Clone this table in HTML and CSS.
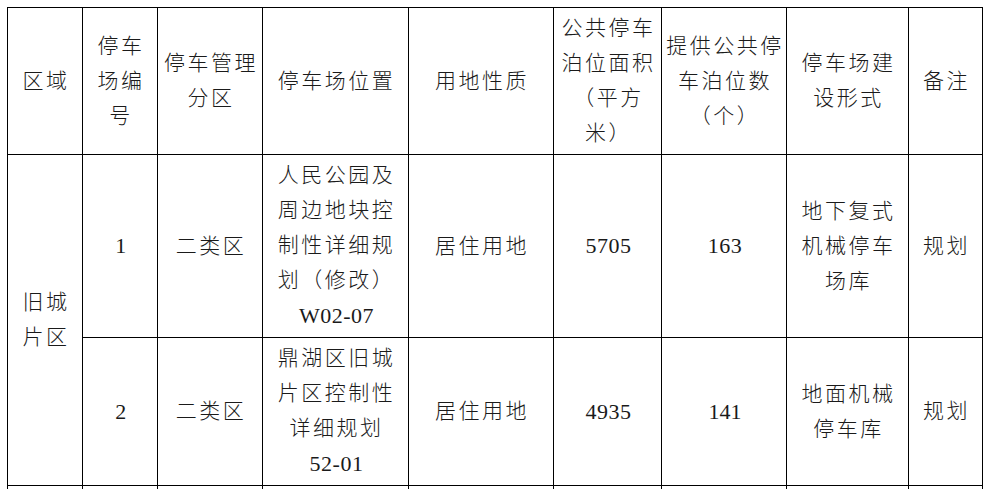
FILE: index.html
```html
<!DOCTYPE html>
<html lang="zh-CN">
<head>
<meta charset="utf-8">
<title>停车场规划表</title>
<link rel="stylesheet" href="styles.css">
</head>
<body>
<table class="parking">
  <colgroup>
    <col class="c1"><col class="c2"><col class="c3"><col class="c4"><col class="c5"><col class="c6"><col class="c7"><col class="c8"><col class="c9">
  </colgroup>
  <thead>
    <tr class="head">
      <th>区域</th>
      <th>停车<br>场编<br>号</th>
      <th>停车管理<br>分区</th>
      <th>停车场位置</th>
      <th>用地性质</th>
      <th>公共停车<br>泊位面积<br>（平方<br>米）</th>
      <th>提供公共停<br>车泊位数<br>（个）</th>
      <th>停车场建<br>设形式</th>
      <th>备注</th>
    </tr>
  </thead>
  <tbody>
    <tr class="r1">
      <td rowspan="2" class="area">旧城<br>片区</td>
      <td><span class="num">1</span></td>
      <td>二类区</td>
      <td>人民公园及<br>周边地块控<br>制性详细规<br>划（修改）<br><span class="num">W02-07</span></td>
      <td>居住用地</td>
      <td><span class="num">5705</span></td>
      <td><span class="num">163</span></td>
      <td>地下复式<br>机械停车<br>场库</td>
      <td>规划</td>
    </tr>
    <tr class="r2">
      <td><span class="num">2</span></td>
      <td>二类区</td>
      <td>鼎湖区旧城<br>片区控制性<br>详细规划<br><span class="num">52-01</span></td>
      <td>居住用地</td>
      <td><span class="num">4935</span></td>
      <td><span class="num tight">141</span></td>
      <td>地面机械<br>停车库</td>
      <td>规划</td>
    </tr>
    <tr class="r3">
      <td></td><td></td><td></td><td></td><td></td><td></td><td></td><td></td><td></td>
    </tr>
  </tbody>
</table>
</body>
</html>
```

FILE: styles.css
```css
html, body {
  margin: 0;
  padding: 0;
  background: #ffffff;
  overflow: hidden;
}

.parking {
  margin: 7px 0 0 7px;
  border-collapse: collapse;
  table-layout: fixed;
  width: 975px;
  font-family: "Liberation Serif", "Noto Sans CJK SC", serif;
  font-size: 21px;
  font-weight: 300;
  color: #1a1a1a;
  line-height: 35px;
  letter-spacing: 2.5px;
}

.c1 { width: 75px; }
.c2 { width: 75px; }
.c3 { width: 105px; }
.c4 { width: 146px; }
.c5 { width: 145px; }
.c6 { width: 108px; }
.c7 { width: 125px; }
.c8 { width: 122px; }
.c9 { width: 74px; }

.parking th,
.parking td {
  border: 1px solid #000;
  padding: 0 0 0 2px;
  text-align: center;
  vertical-align: middle;
  font-weight: 300;
  white-space: nowrap;
}

.head { height: 147px; }
.r1 { height: 183px; }
.r2 { height: 148px; }
.r3 { height: 120px; }

.num {
  font-size: 22px;
  letter-spacing: 0.5px;
}

.tight {
  letter-spacing: 0;
}
```
